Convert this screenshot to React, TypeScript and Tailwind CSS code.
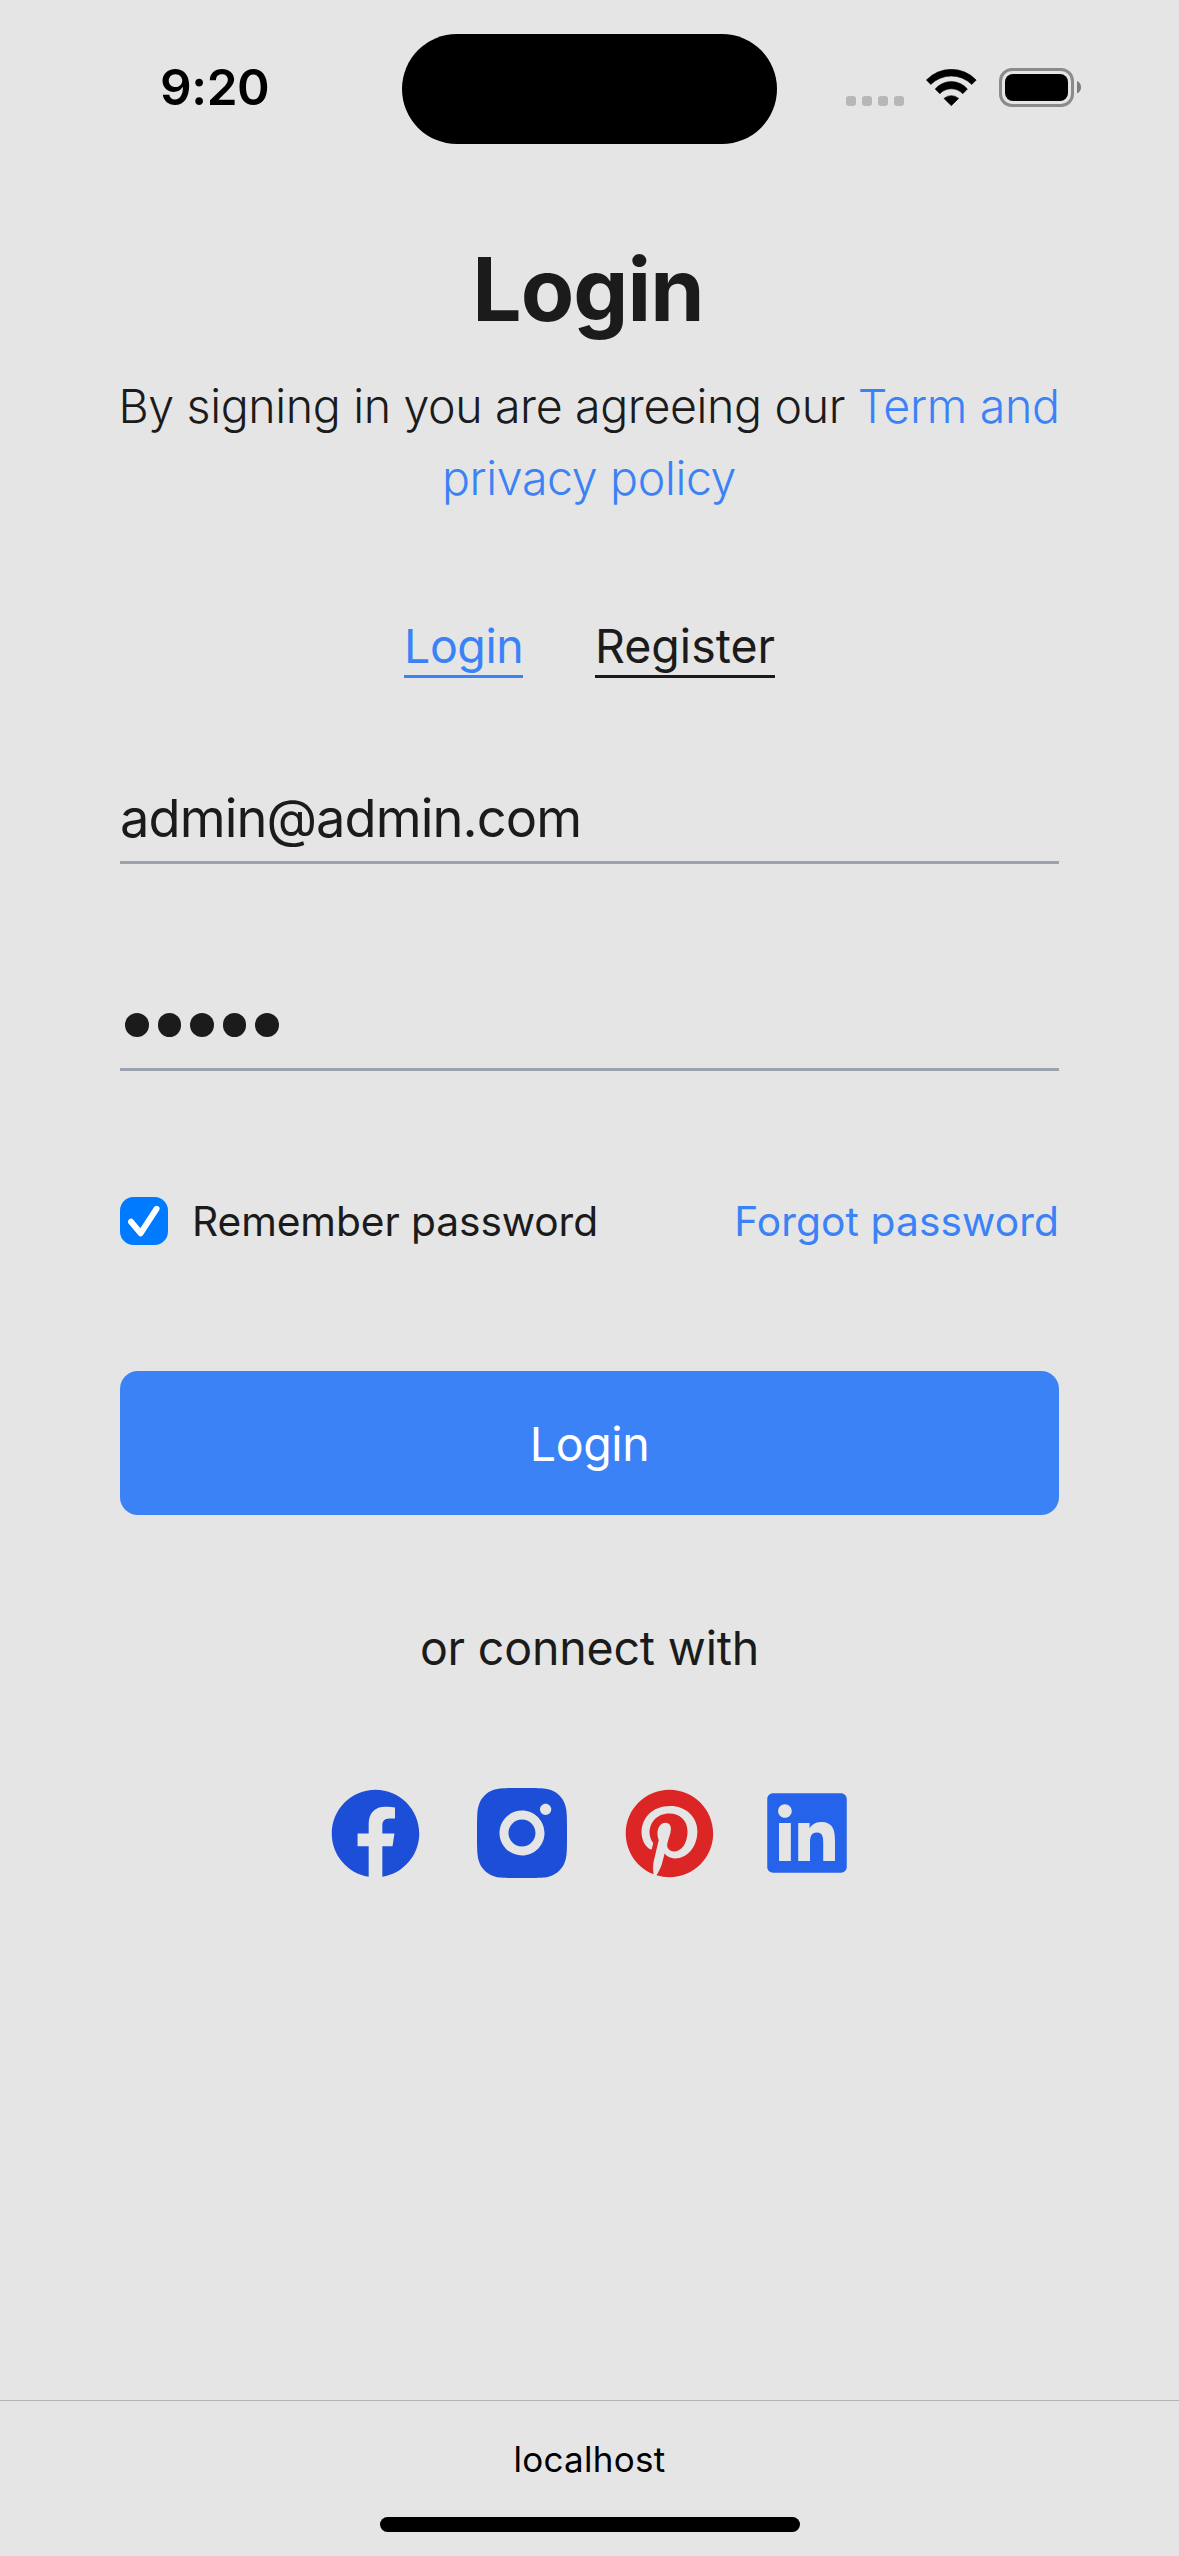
import { useState } from "react";
import { RiInstagramFill, RiLinkedinBoxFill } from "react-icons/ri";
import { BiLogoFacebookCircle, BiLogoPinterest } from "react-icons/bi";

function WifiIcon() {
  return (
    <svg width="51" height="37" viewBox="0 0 51 37" fill="currentColor" stroke="currentColor" strokeWidth="0.6" strokeLinejoin="round">
      <path d="M0.4 11A34.4 34.4 0 0 1 50.2 11L45.8 15.4A29.2 29.2 0 0 0 4.8 15.4Z" />
      <path d="M9.2 20A21.2 21.2 0 0 1 41.4 20L36.8 24.7A16 16 0 0 0 13.8 24.7Z" />
      <path d="M18 29.4A11 11 0 0 1 32.6 29.4L25.3 36.7Z" />
    </svg>
  );
}

function BatteryIcon() {
  return (
    <svg width="82" height="39" viewBox="0 0 82 39">
      <rect x="1.5" y="1.5" width="72" height="36" rx="11.5" fill="none" stroke="#8b8b8b" strokeWidth="3" />
      <rect x="6" y="6" width="63" height="27" rx="8" fill="#000" />
      <path d="M78 13C80.8 14 82 16.5 82 19.2S80.8 24.4 78 25.3Z" fill="#7d7d7d" />
    </svg>
  );
}

function StatusBar() {
  return (
    <div className="grid h-[178px] shrink-0 grid-cols-[402px_375px_1fr] items-center">
      <div className="pb-0.5 pl-[160px] text-[49.5px] leading-none font-semibold tracking-[-0.4px] text-black">9:20</div>
      <div className="h-[110px] rounded-full bg-black" />
      <div className="mb-[3px] flex h-[39px] items-end pl-[69px] text-black">
        <div className="mb-px flex gap-1.5">
          {[0, 1, 2, 3].map((i) => (
            <span key={i} className="size-2.5 rounded-[3px] bg-[#b7b7b7]" />
          ))}
        </div>
        <div className="mb-px ml-[22px]">
          <WifiIcon />
        </div>
        <div className="ml-[22px]">
          <BatteryIcon />
        </div>
      </div>
    </div>
  );
}

export default function App() {
  const [email, setEmail] = useState("admin@admin.com");
  const [remember, setRemember] = useState(true);
  const passwordLength = 5;

  return (
    <div className="flex h-[2556px] w-[1179px] flex-col overflow-hidden bg-[#e5e5e5] font-['Inter','Liberation_Sans',sans-serif] text-[#1b1b1b]">
      <StatusBar />

      <main className="flex flex-1 flex-col">
        <h1 className="mt-[51px] pr-[3px] text-center text-[87.3px] leading-[120px] font-bold tracking-[-0.93px]">Login</h1>
        <p className="mt-[21px] pr-px text-center text-[46.5px] leading-[72px] font-light tracking-[-0.36px] whitespace-nowrap">
          By signing in you are agreeing our{" "}
          <a className="text-[#3b82f6]">
            Term and
            <br />
            privacy policy
          </a>
        </p>

        <nav className="mt-[102px] flex justify-center gap-[72px] text-[46.5px] leading-[60px] whitespace-nowrap">
          <a className="h-[62px] w-[119px] border-b-3 border-[#3b82f6] tracking-[-0.4px] text-[#3b82f6]">Login</a>
          <a className="h-[62px] w-[180px] border-b-3 border-[#1b1b1b]">Register</a>
        </nav>

        <form className="flex flex-col px-[120px]">
          <input
            type="text"
            value={email}
            onChange={(e) => setEmail(e.target.value)}
            className="mt-[97px] h-[89px] border-b-3 border-[#9ca3af] text-[52.4px] tracking-[-0.92px] outline-none"
          />
          <div className="mt-[118px] flex h-[89px] items-center gap-[9px] border-b-3 border-[#9ca3af] pl-[5px]">
            {Array.from({ length: passwordLength }, (_, i) => (
              <span key={i} className="size-[23.5px] rounded-full bg-[#1b1b1b]" />
            ))}
          </div>

          <div className="mt-[126px] flex h-12 items-center justify-between text-[40.7px] leading-none">
            <label className="flex items-center gap-6 tracking-[-0.08px]">
              <input type="checkbox" checked={remember} onChange={() => setRemember(!remember)} className="sr-only" />
              <span className="size-12 rounded-[13.5px] bg-[#007aff]">
                {remember && (
                  <svg width="48" height="48" viewBox="0 0 48 48" fill="none" stroke="#fff" strokeWidth="6" strokeLinecap="round" strokeLinejoin="round">
                    <path d="M11 24.8L20.7 36.2L36.5 11.8" />
                  </svg>
                )}
              </span>
              <span className="pt-0.5">Remember password</span>
            </label>
            <a className="pt-0.5 tracking-[0.1px] text-[#3b82f6]">Forgot password</a>
          </div>

          <button
            type="button"
            className="mt-[126px] flex h-36 items-center justify-center rounded-[18px] bg-[#3b82f6] pt-0.5 text-[46.5px] leading-none tracking-[-0.4px] text-white"
          >
            Login
          </button>
        </form>

        <p className="mt-[97px] text-center text-[46.5px] leading-[72px] tracking-[-0.18px]">or connect with</p>

        <div className="mt-[95px] flex h-[108px] items-center pl-[322.5px]">
          <BiLogoFacebookCircle className="size-[105px] text-[#1d4ed8]" />
          <RiInstagramFill className="ml-[40.5px] size-[108px] text-[#1d4ed8]" />
          <BiLogoPinterest className="ml-[40.5px] size-[105px] text-[#dc2626]" />
          <RiLinkedinBoxFill className="ml-[32.5px] size-[106px] text-[#2563eb]" />
        </div>
      </main>

      <footer className="flex h-[156px] shrink-0 flex-col items-center border-t border-[#b4b4b4] pt-[34px] text-black">
        <span className="text-[35px] leading-[48px] tracking-[0.3px]">localhost</span>
        <span className="mt-[34px] h-[15px] w-[420px] rounded-full bg-black" />
      </footer>
    </div>
  );
}
